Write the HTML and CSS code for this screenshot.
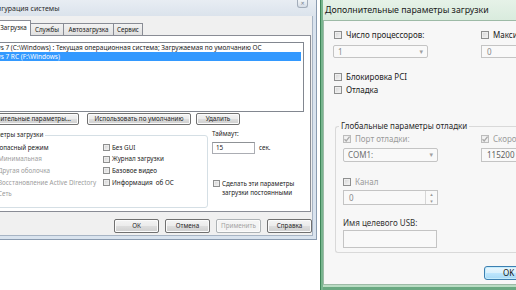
FILE: index.html
```html
<!DOCTYPE html>
<html>

<head>
  <meta http-equiv="Content-Type" content="text/html; charset=utf-8">
  <link rel="stylesheet" href="styles.css">
</head>

<body>
  <div class="screen">

    <!-- Конфигурация системы -->
    <div class="lw">
      <div class="lw-title">
        <span class="lw-caption">Конфигурация системы</span>
        <span class="close">✕</span>
      </div>
      <div class="lw-client">
        <div class="tabs">
          <div class="tab tab-active">Загрузка</div>
          <div class="tab t-svc">Службы</div>
          <div class="tab t-auto">Автозагрузка</div>
          <div class="tab t-tools">Сервис</div>
        </div>
        <div class="panel">
          <div class="oslist">
            <div class="os">Windows 7 (C:\Windows) : Текущая операционная система; Загружаемая по умолчанию ОС</div>
            <div class="os os-sel">Windows 7 RC (F:\Windows)</div>
          </div>
          <div class="list-btns">
            <div class="btn b-adv">Дополнительные параметры...</div>
            <div class="btn b-def">Использовать по умолчанию</div>
            <div class="btn b-del">Удалить</div>
          </div>
          <div class="boot-area">
            <fieldset class="boot-opts">
              <legend>Параметры загрузки</legend>
              <div class="opt-grid">
                <div class="opt opt-safe"><span class="cb"></span>Безопасный режим</div>
                <div class="opt"><span class="cb"></span>Без GUI</div>
                <div class="opt opt-radio">Минимальная</div>
                <div class="opt"><span class="cb"></span>Журнал загрузки</div>
                <div class="opt opt-radio">Другая оболочка</div>
                <div class="opt"><span class="cb"></span>Базовое видео</div>
                <div class="opt opt-radio">Восстановление Active Directory</div>
                <div class="opt"><span class="cb"></span>Информация&nbsp; об ОС</div>
                <div class="opt opt-radio">Сеть</div>
              </div>
            </fieldset>
            <div class="timeout">
              <div class="to-label">Таймаут:</div>
              <div class="to-row">
                <div class="to-input">15</div>
                <span>сек.</span>
              </div>
              <div class="to-check">
                <span class="cb"></span>
                <span>Сделать эти параметры<br>загрузки постоянными</span>
              </div>
            </div>
          </div>
        </div>
        <div class="dlg-btns">
          <div class="btn">ОК</div>
          <div class="btn">Отмена</div>
          <div class="btn btn-off">Применить</div>
          <div class="btn">Справка</div>
        </div>
      </div>
    </div>

    <!-- Дополнительные параметры загрузки -->
    <div class="rw">
      <div class="rw-title">Дополнительные параметры загрузки</div>
      <div class="rw-client">
        <div class="r-grid r-first">
          <div class="rcheck"><span class="rcb"></span>Число процессоров:</div>
          <div class="rcheck"><span class="rcb"></span>Максимальный объем памяти:</div>
        </div>
        <div class="r-grid r-fields">
          <div class="combo c-cpu"><span>1</span><span class="arrow">▾</span></div>
          <div class="field">0</div>
        </div>
        <div class="rcheck r-pci"><span class="rcb"></span>Блокировка PCI</div>
        <div class="rcheck r-dbg"><span class="rcb"></span>Отладка</div>

        <fieldset class="dbg-opts">
          <legend>Глобальные параметры отладки</legend>
          <div class="d-grid">
            <div class="rcheck off"><span class="rcb rcb-on"><svg viewBox="0 0 8 8"><polyline points="1.5,4.2 3.2,6 6.6,1.6"/></svg></span>Порт отладки:</div>
            <div class="rcheck off"><span class="rcb rcb-on"><svg viewBox="0 0 8 8"><polyline points="1.5,4.2 3.2,6 6.6,1.6"/></svg></span>Скорость передачи:</div>
          </div>
          <div class="d-grid d-fields">
            <div class="combo c-port"><span>COM1:</span><span class="arrow">▾</span></div>
            <div class="field f-baud">115200</div>
          </div>
          <div class="rcheck off d-chan"><span class="rcb"></span>Канал</div>
          <div class="spin">
            <span>0</span>
            <span class="spin-btns"><span>▴</span><span>▾</span></span>
          </div>
          <div class="usb-label">Имя целевого USB:</div>
          <div class="usb-field"></div>
        </fieldset>

        <div class="ok-btn">OK</div>
      </div>
    </div>

  </div>
</body>

</html>
```

FILE: styles.css
```css
html,
body {
  margin: 0;
  padding: 0;
  overflow: hidden;
  background: #fff;
}

.screen {
  display: flex;
  width: 516px;
  height: 290px;
  overflow: hidden;
  font-family: "Noto Sans", "DejaVu Sans", sans-serif;
  color: #222;
}

/* ---- left window ---- */

.lw {
  flex: none;
  width: 317px;
  height: 240px;
  box-sizing: border-box;
  display: flex;
  flex-direction: column;
  background: #d9e3ee;
  border-right: 1px solid #8a9bb0;
  border-bottom: 1px solid #8a9bb0;
  overflow: hidden;
  font-size: 6.3px;
  line-height: 8px;
}

.lw-title {
  flex: none;
  height: 16px;
  display: flex;
  justify-content: space-between;
  align-items: center;
  background: linear-gradient(#e8edf3, #dbe3ec);
  font-size: 7px;
  color: #2b2b2b;
}

.lw-caption {
  margin-left: -21px;
  white-space: nowrap;
  margin-top: 1px;
}

.close {
  align-self: flex-start;
  width: 11px;
  height: 8px;
  margin-right: 8px;
  box-sizing: border-box;
  border: 1px solid #a3adba;
  border-top: none;
  border-radius: 0 0 3px 3px;
  background: linear-gradient(#f2f5f8, #d6dde6);
  color: #707c8c;
  font-size: 5px;
  line-height: 7px;
  text-align: center;
}

.lw-client {
  flex: 1;
  display: flex;
  flex-direction: column;
  background: #f0f0f0;
  margin-right: 3px;
  margin-bottom: 3px;
  border-right: 1px solid #a7b4c4;
  border-bottom: 1px solid #a7b4c4;
}

.tabs {
  display: flex;
  align-items: flex-end;
  margin-top: 4px;
  margin-left: -4px;
}

.tab {
  height: 12px;
  box-sizing: border-box;
  border: 1px solid #898c95;
  border-left: none;
  border-bottom: none;
  background: linear-gradient(#f3f3f3, #e0e0e0);
  text-align: center;
  line-height: 11px;
  white-space: nowrap;
}

.tab-active {
  height: 16px;
  width: 35px;
  margin-bottom: -1px;
  border-left: 1px solid #898c95;
  background: #fff;
  line-height: 13px;
  z-index: 1;
}

.t-svc {
  width: 33px;
}

.t-auto {
  width: 50px;
}

.t-tools {
  width: 29px;
}

.panel {
  height: 177px;
  box-sizing: border-box;
  margin-left: -10px;
  margin-right: 1px;
  border: 1px solid #898c95;
  background: #fff;
  padding-top: 6px;
}

.oslist {
  width: 333px;
  height: 70px;
  box-sizing: border-box;
  margin-left: -20px;
  border: 1px solid #828790;
}

.os {
  height: 9px;
  line-height: 9px;
  padding-left: 4px;
  white-space: nowrap;
  color: #1b1b1b;
  font-size: 6.5px;
}

.os-sel {
  margin-right: 2px;
  background: #3399ff;
  color: #fff;
}

.list-btns {
  display: flex;
  margin-top: 1px;
}

.btn {
  height: 12px;
  box-sizing: border-box;
  border: 1px solid #707070;
  border-radius: 2px;
  background: linear-gradient(#f4f4f4 0%, #ebebeb 50%, #dddddd 51%, #cfcfcf 100%);
  box-shadow: inset 0 0 0 1px #fbfbfb;
  text-align: center;
  line-height: 10px;
  white-space: nowrap;
  color: #1e1e1e;
}

.b-adv {
  margin-left: -22px;
  width: 110px;
}

.b-def {
  margin-left: 8px;
  width: 104px;
}

.b-del {
  margin-left: 5px;
  width: 44px;
}

.boot-area {
  display: flex;
  align-items: flex-start;
  margin-top: 6px;
}

.boot-opts {
  width: 236px;
  height: 77px;
  box-sizing: border-box;
  margin: 0 0 0 -19px;
  padding: 3px 0 0 0;
  border: 1px solid #d5dfe5;
  border-radius: 3px;
}

.boot-opts legend {
  margin-left: 5px;
  padding: 0 2px;
  line-height: 8px;
  color: #1e1e1e;
}

.opt-grid {
  display: grid;
  grid-template-columns: 130px 1fr;
  grid-auto-rows: 11.6px;
}

.opt {
  display: flex;
  align-items: center;
  gap: 2px;
  white-space: nowrap;
}

.opt-safe {
  margin-left: 7px;
}

.opt-radio {
  margin-left: 25px;
  color: #9d9d9d;
}

.cb {
  flex: none;
  width: 7px;
  height: 7px;
  box-sizing: border-box;
  border: 1px solid #8e8f8f;
  background: linear-gradient(135deg, #cfcfcf, #f6f6f6);
  box-shadow: inset 0 0 0 1px #ececec;
}

.timeout {
  margin-left: 4px;
}

.to-label {
  margin-top: -1px;
}

.to-row {
  display: flex;
  align-items: center;
  gap: 4px;
  margin-top: 4px;
}

.to-input {
  width: 43px;
  height: 12px;
  box-sizing: border-box;
  border: 1px solid #abadb3;
  border-top-color: #8f9296;
  padding-left: 3px;
  line-height: 10px;
  background: #fff;
}

.to-check {
  display: flex;
  align-items: flex-start;
  gap: 2px;
  margin-top: 25px;
  margin-left: 1px;
  line-height: 9px;
}

.to-check .cb {
  margin-top: 1px;
}

.dlg-btns {
  display: flex;
  justify-content: flex-end;
  gap: 6px;
  margin-top: 7px;
}

.dlg-btns .btn {
  width: 45px;
  height: 14px;
  line-height: 12px;
}

.btn-off {
  color: #a2a2a2;
  border-color: #adb2b5;
  background: #f4f4f4;
}

/* ---- right window ---- */

.rw {
  flex: none;
  width: 240px;
  height: 290px;
  margin-left: 3px;
  box-sizing: border-box;
  border-left: 1px solid #3d8658;
  background: linear-gradient(#e6f2e8, #d3e8d8 30px, #b9dcc3);
  box-shadow: inset 2px 0 0 #79b58f, inset 0 -3px 0 #6aa982;
  font-size: 8px;
  line-height: 10px;
}

.rw-title {
  height: 20px;
  padding-left: 4px;
  line-height: 20px;
  font-size: 8.8px;
  color: #1a1a1a;
  white-space: nowrap;
}

.rw-client {
  height: 265px;
  box-sizing: border-box;
  margin-left: 2px;
  border: 1px solid #9dbaa6;
  border-right: none;
  background: #f7f7f7;
  padding-left: 10px;
  overflow: hidden;
}

.r-grid {
  display: grid;
  grid-template-columns: 147px 1fr;
}

.r-first {
  margin-top: 9px;
}

.rcheck {
  display: flex;
  align-items: center;
  gap: 4px;
  height: 10px;
  white-space: nowrap;
  color: #222;
}

.rcb {
  flex: none;
  width: 8px;
  height: 8px;
  box-sizing: border-box;
  border: 1px solid #8e8f8f;
  background: linear-gradient(135deg, #d3d3d3, #f7f7f7);
  box-shadow: inset 0 0 0 1px #eeeeee;
  display: flex;
}

.rcb svg {
  width: 8px;
  height: 8px;
  margin: -1px;
  fill: none;
  stroke: #a9a9a9;
  stroke-width: 1.3;
}

.rcb-on {
  border-color: #bcbcbc;
  background: #f3f3f3;
}

.off {
  color: #9b9b9b;
}

.r-fields {
  margin-top: 5px;
}

.combo {
  width: 95px;
  height: 13px;
  box-sizing: border-box;
  display: flex;
  justify-content: space-between;
  align-items: center;
  border: 1px solid #c4c4c4;
  border-radius: 2px;
  background: #f9f9f9;
  padding: 0 4px 0 4px;
  color: #8a8a8a;
}

.c-cpu {
  margin-left: -1px;
}

.arrow {
  font-size: 7px;
  color: #a0a0a0;
}

.field {
  height: 13px;
  box-sizing: border-box;
  border: 1px solid #c4c4c4;
  border-right: none;
  background: #f9f9f9;
  padding-left: 5px;
  line-height: 11px;
  color: #8a8a8a;
}

.r-pci {
  margin-top: 14px;
}

.r-dbg {
  margin-top: 3px;
}

.dbg-opts {
  margin: 26px 0 0 1px;
  padding: 3px 0 4px 7px;
  border: 1px solid #d9d9d9;
  border-right: none;
  border-radius: 3px 0 0 3px;
}

.dbg-opts legend {
  margin-left: -4px;
  padding: 0 2px;
  line-height: 10px;
  color: #2a2a2a;
}

.d-grid {
  display: grid;
  grid-template-columns: 138px 1fr;
}

.d-fields {
  margin-top: 4px;
}

.c-port {
  height: 14px;
  color: #6f6f6f;
}

.f-baud {
  height: 14px;
  line-height: 12px;
  color: #5f5f5f;
}

.d-chan {
  margin-top: 15px;
}

.spin {
  width: 95px;
  height: 15px;
  box-sizing: border-box;
  margin-top: 3px;
  display: flex;
  justify-content: space-between;
  border: 1px solid #c4c4c4;
  background: #f9f9f9;
  padding-left: 5px;
  line-height: 13px;
  color: #8a8a8a;
}

.spin-btns {
  width: 11px;
  display: flex;
  flex-direction: column;
  border-left: 1px solid #d6d6d6;
  font-size: 5px;
  line-height: 6.5px;
  text-align: center;
  color: #9a9a9a;
}

.usb-label {
  margin-top: 13px;
  color: #333;
}

.usb-field {
  width: 94px;
  height: 18px;
  box-sizing: border-box;
  margin-top: 2px;
  border: 1px solid #c4c4c4;
  background: #f9f9f9;
}

.ok-btn {
  width: 60px;
  height: 14px;
  box-sizing: border-box;
  margin: 13px 0 0 150px;
  border: 1px solid #3c7fb1;
  border-radius: 3px;
  background: linear-gradient(#eaf6fd 0%, #d9f0fc 50%, #bee6fd 51%, #a7d9f5 100%);
  box-shadow: inset 0 0 0 1px #c5ecfc;
  padding-left: 18px;
  line-height: 12px;
  color: #111;
}
```
